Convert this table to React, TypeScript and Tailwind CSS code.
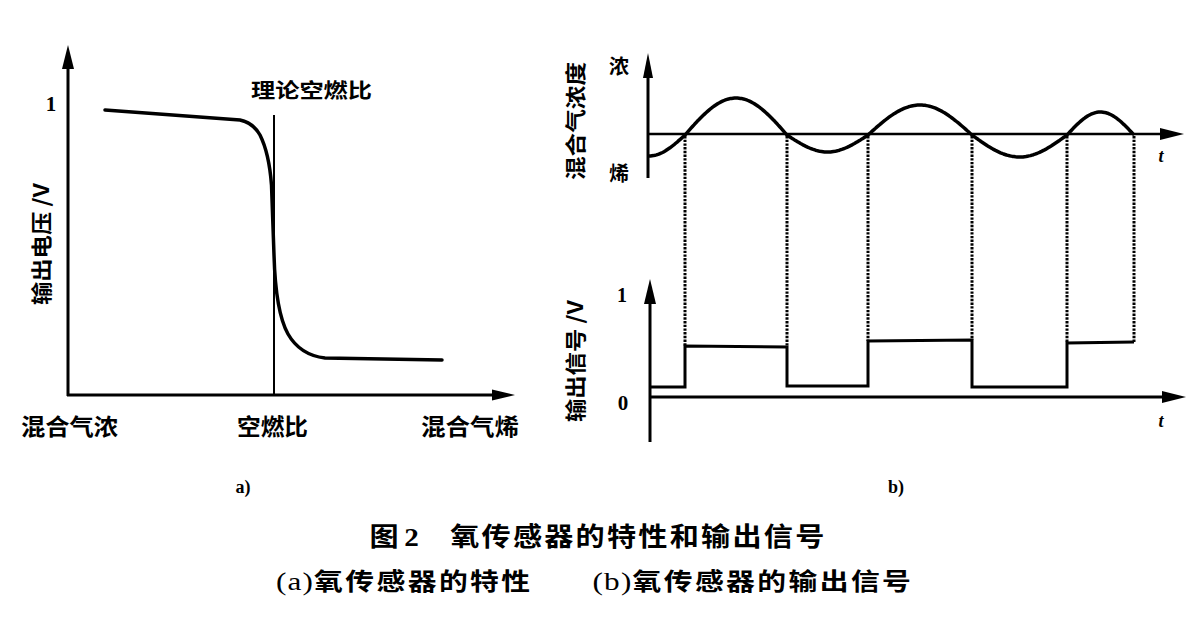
import React from "react";

const CJK = '"Noto Sans CJK SC", "Noto Sans", sans-serif';
const SERIF = '"Liberation Serif", "DejaVu Serif", serif';

type Seg = [number, number, number];

// half waves of the mixture curve: [x0, x1, amplitude]
const waves: Seg[] = [
  [613, 685, -21],
  [685, 787, 37],
  [787, 868, -17],
  [868, 972, 30],
  [972, 1067, -22],
  [1067, 1134, 23],
];

function sinePath() {
  const pts: string[] = [];
  waves.forEach(([x0, x1, a], i) => {
    const start = i === 0 ? 649 : x0;
    for (let x = start; x <= x1; x += 1.5) {
      const y = 135 - a * Math.sin((Math.PI * (x - x0)) / (x1 - x0));
      pts.push(`${x.toFixed(1)},${y.toFixed(1)}`);
    }
  });
  return "M" + pts.join(" L");
}

function Label({ x, y, len, size, children }: { x: number; y: number; len: number; size: number; children: string }) {
  return (
    <text
      x={x}
      y={y}
      textLength={len}
      lengthAdjust="spacingAndGlyphs"
      dominantBaseline="central"
      fontFamily={CJK}
      fontWeight={700}
      fontSize={size}
      fill="#000"
    >
      {children}
    </text>
  );
}

function VLabel({ cx, cy, len, size, children }: { cx: number; cy: number; len: number; size: number; children: string }) {
  return (
    <text
      x={cx}
      y={cy}
      textAnchor="middle"
      textLength={len}
      lengthAdjust="spacingAndGlyphs"
      dominantBaseline="central"
      transform={`rotate(-90 ${cx} ${cy})`}
      fontFamily={CJK}
      fontWeight={700}
      fontSize={size}
      fill="#000"
    >
      {children}
    </text>
  );
}

function CharacteristicChart() {
  return (
    <svg width={540} height={500} viewBox="0 0 540 500" className="block shrink-0">
      {/* axes */}
      <line x1={68} y1={60} x2={68} y2={396} stroke="#000" strokeWidth={3} />
      <polygon points="68,45 62,69 74,69" fill="#000" />
      <line x1={67} y1={395} x2={500} y2={395} stroke="#000" strokeWidth={3} />
      <polygon points="515,395 492,389.5 492,400.5" fill="#000" />

      <text x={51} y={111} textAnchor="middle" fontFamily={SERIF} fontWeight={700} fontSize={21} fill="#000">
        1
      </text>

      {/* stoichiometric line */}
      <line x1={274} y1={115} x2={274} y2={395} stroke="#000" strokeWidth={2} />
      <Label x={251} y={89.5} len={121} size={20}>理论空燃比</Label>

      <path
        d="M105,110 L240,120 C250,122 256,128 260,135 C266,147 270,165 271.5,185 L274,255 C275,290 279,318 288,334 C296,348 308,356 325,358 L442,360"
        fill="none"
        stroke="#000"
        strokeWidth={3.5}
        strokeLinecap="round"
      />

      <VLabel cx={40} cy={244} len={122} size={21}>输出电压 /V</VLabel>

      <Label x={21} y={425} len={97} size={23}>混合气浓</Label>
      <Label x={237} y={425} len={71} size={23}>空燃比</Label>
      <Label x={421} y={425} len={98} size={23}>混合气烯</Label>

      <text x={243} y={493} textAnchor="middle" fontFamily={SERIF} fontWeight={700} fontSize={18} fill="#000">
        a)
      </text>
    </svg>
  );
}

function SignalChart() {
  const drops = [
    [685, 346],
    [787, 346],
    [868, 341],
    [972, 340],
    [1067, 343],
    [1134, 342],
  ];
  return (
    <svg width={660} height={500} viewBox="540 0 660 500" className="block shrink-0">
      {/* mixture concentration */}
      <line x1={648} y1={70} x2={648} y2={178} stroke="#000" strokeWidth={3} />
      <polygon points="648,53 643,78 653,78" fill="#000" />
      <line x1={647} y1={134} x2={1165} y2={134} stroke="#000" strokeWidth={2.5} />
      <polygon points="1184,134 1160,128 1160,140" fill="#000" />

      <text x={619} y={65} textAnchor="middle" dominantBaseline="central" fontFamily={CJK} fontWeight={700} fontSize={20} fill="#000">
        浓
      </text>
      <text x={619} y={172} textAnchor="middle" dominantBaseline="central" fontFamily={CJK} fontWeight={700} fontSize={20} fill="#000">
        烯
      </text>
      <VLabel cx={574} cy={121} len={118} size={21}>混合气浓度</VLabel>

      <path d={sinePath()} fill="none" stroke="#000" strokeWidth={3.5} strokeLinejoin="round" strokeLinecap="round" />

      {drops.map(([x, y]) => (
        <line key={x} x1={x} y1={136} x2={x} y2={y} stroke="#000" strokeWidth={3} strokeDasharray="2.4 1.3" />
      ))}

      <text x={1161} y={162} textAnchor="middle" fontFamily={SERIF} fontStyle="italic" fontWeight={700} fontSize={18} fill="#000">
        t
      </text>

      {/* output signal */}
      <line x1={650} y1={296} x2={650} y2={442} stroke="#000" strokeWidth={3} />
      <polygon points="650,279 644,304 656,304" fill="#000" />
      <line x1={649} y1={397} x2={1166} y2={397} stroke="#000" strokeWidth={3} />
      <polygon points="1186,397 1162,391 1162,403" fill="#000" />

      <text x={622} y={302} textAnchor="middle" fontFamily={SERIF} fontWeight={700} fontSize={20} fill="#000">
        1
      </text>
      <text x={623} y={410} textAnchor="middle" fontFamily={SERIF} fontWeight={700} fontSize={21} fill="#000">
        0
      </text>
      <VLabel cx={574} cy={361} len={122} size={21}>输出信号 /V</VLabel>

      <path
        d="M650,387 L685,387 L685,346 L787,347 L787,386 L868,386 L868,341 L972,340 L972,387 L1067,387 L1067,343 L1134,342"
        fill="none"
        stroke="#000"
        strokeWidth={3}
        strokeLinejoin="miter"
      />

      <text x={1161} y={427} textAnchor="middle" fontFamily={SERIF} fontStyle="italic" fontWeight={700} fontSize={18} fill="#000">
        t
      </text>

      <text x={896} y={493} textAnchor="middle" fontFamily={SERIF} fontWeight={700} fontSize={18} fill="#000">
        b)
      </text>
    </svg>
  );
}

export default function App() {
  return (
    <div className="flex h-[631px] w-[1200px] flex-col overflow-hidden bg-white text-black">
      <div className="flex">
        <CharacteristicChart />
        <SignalChart />
      </div>

      <div className="flex flex-col items-center">
        <p
          className="mr-[4px] mt-[20px] flex scale-x-[1.12] items-baseline text-[26px] font-bold leading-[30px]"
          style={{ fontFamily: CJK }}
        >
          <span>图</span>
          <span className="ml-[5px]" style={{ fontFamily: SERIF }}>2</span>
          <span className="ml-[28px] tracking-[2px]">氧传感器的特性和输出信号</span>
        </p>
        <p
          className="mr-[11px] mt-[12px] flex scale-x-[1.2] items-baseline text-[24px] font-bold leading-[30px]"
          style={{ fontFamily: CJK }}
        >
          <span className="tracking-[2px]">
            <span className="text-[26px] font-normal tracking-[1px]" style={{ fontFamily: SERIF }}>(a)</span>氧传感器的特性
          </span>
          <span className="ml-[50px] tracking-[2px]">
            <span className="text-[26px] font-normal tracking-[1px]" style={{ fontFamily: SERIF }}>(b)</span>氧传感器的输出信号
          </span>
        </p>
      </div>
    </div>
  );
}
